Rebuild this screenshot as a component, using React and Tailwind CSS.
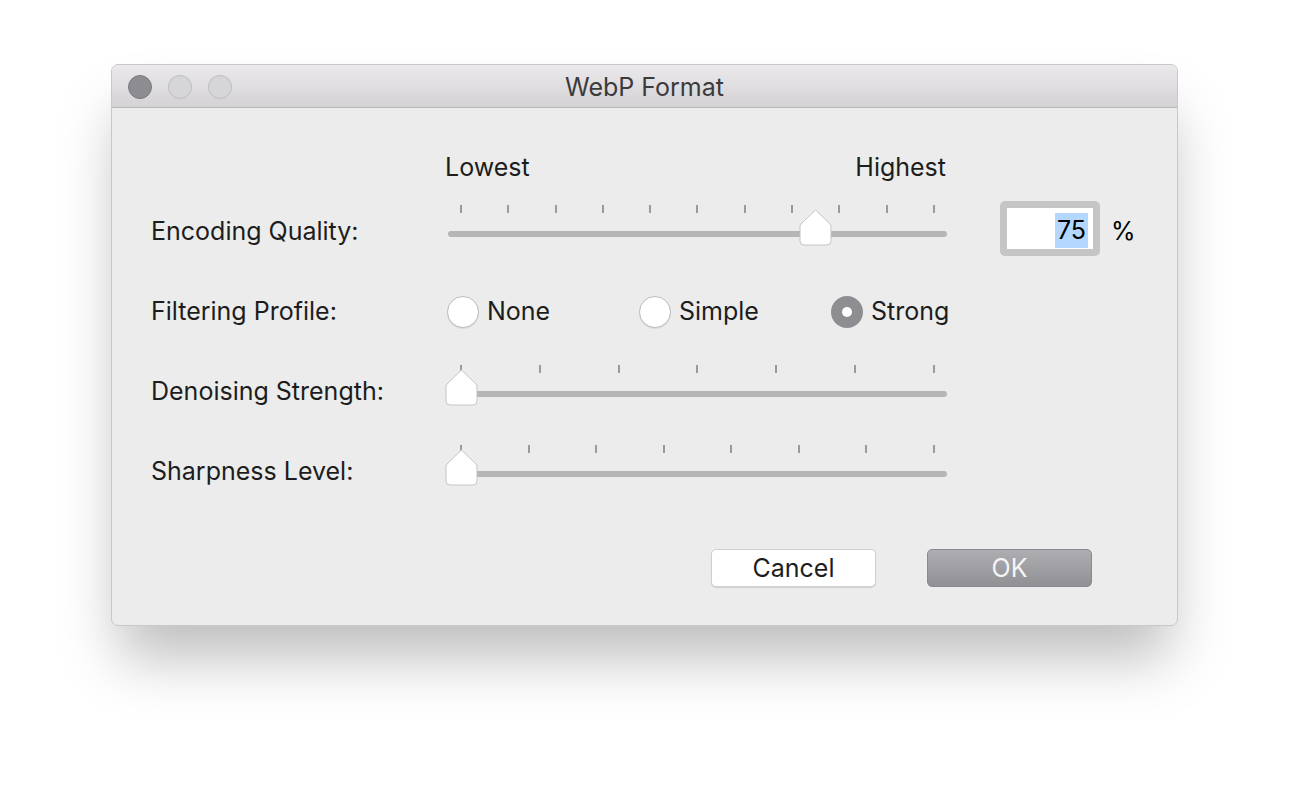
const font = { fontFamily: "Inter, 'Liberation Sans', sans-serif" };

const Thumb = ({ left }) => (
  <svg
    className="absolute top-[4px]"
    style={{ left }}
    width="33"
    height="37"
    viewBox="0 0 33 37"
  >
    <path
      d="M16.5 1 L31 15 Q32 16 32 18 L32 32 Q32 36 28 36 L5 36 Q1 36 1 32 L1 18 Q1 16 2 15 Z"
      fill="#ffffff"
      stroke="#c4c4c4"
      strokeWidth="1"
    />
  </svg>
);

const Slider = ({ ticks, value }) => {
  // tick 0 sits at 13px, last tick at 486px within a 499px track
  const thumbLeft = 13 + value * 473 - 16.5;
  return (
    <div className="relative w-[499px] h-[48px] self-start mt-[13px]">
      <div className="flex justify-between px-[12px]">
        {Array.from({ length: ticks }).map((_, i) => (
          <div key={i} className="w-[2px] h-[8px] bg-[#9b9b9b]" />
        ))}
      </div>
      <div className="mt-[18px] h-[6px] rounded-full bg-[#b6b6b6]" />
      <Thumb left={thumbLeft} />
    </div>
  );
};

const Radio = ({ label, checked }) => (
  <div className="flex items-center w-[193px] -ml-[1px]">
    {checked ? (
      <div className="w-[32px] h-[32px] rounded-full bg-[#8e8e92] flex items-center justify-center">
        <div className="w-[10px] h-[10px] rounded-full bg-white" />
      </div>
    ) : (
      <div className="w-[32px] h-[32px] rounded-full bg-white border border-[#bcbcbc] shadow-[0_1px_1px_rgba(0,0,0,0.08)]" />
    )}
    <span className="ml-[8px] text-[25px] text-[#1d1d1d]">{label}</span>
  </div>
);

const Label = ({ children }) => (
  <div className="w-[297px] text-[25px] text-[#1d1d1d] self-center">{children}</div>
);

export default function App() {
  return (
    <div className="min-h-screen bg-white pt-[64px] pl-[111px]" style={font}>
      <div className="w-[1067px] h-[562px] rounded-[7px] border border-[#c8c8c8] bg-[#ececec] shadow-[0_40px_55px_-8px_rgba(0,0,0,0.26)] overflow-hidden">
        {/* title bar */}
        <div className="relative h-[43px] bg-gradient-to-b from-[#ebe9eb] to-[#d4d2d4] border-b border-[#b8b8b8] flex items-center justify-center pt-[3px]">
          <div className="absolute left-[16px] top-[10px] flex gap-[16px]">
            <div className="w-[24px] h-[24px] rounded-full bg-[#8d8c91] border border-[#7a797e]" />
            <div className="w-[24px] h-[24px] rounded-full bg-[#d6d5d7] border border-[#bdbcbe]" />
            <div className="w-[24px] h-[24px] rounded-full bg-[#d6d5d7] border border-[#bdbcbe]" />
          </div>
          <span className="text-[25px] text-[#3b3b3b]">WebP Format</span>
        </div>

        <div className="pl-[39px]">
          <div className="mt-[45px] mb-[9px] h-[30px] flex items-center">
            <div className="w-[297px]" />
            <div className="w-[499px] flex justify-between text-[25px] text-[#1d1d1d] -ml-[3px]">
              <span>Lowest</span>
              <span className="-mr-[2px]">Highest</span>
            </div>
          </div>

          <div className="h-[80px] flex">
            <Label>Encoding Quality:</Label>
            <Slider ticks={11} value={0.75} />
            <div className="self-start mt-[9px] ml-[53px] w-[100px] h-[55px] rounded-[5px] bg-[#c5c5c5] p-[7px]">
              <div className="h-full bg-white flex items-end justify-end pr-[5px] pb-[1px]">
                <span className="bg-[#b3d7ff] text-[25px] leading-[35px] px-[2px] text-black">75</span>
              </div>
            </div>
            <span className="self-center ml-[11px] text-[25px] text-black">%</span>
          </div>

          <div className="h-[80px] flex items-center">
            <Label>Filtering Profile:</Label>
            <Radio label="None" />
            <Radio label="Simple" />
            <Radio label="Strong" checked />
          </div>

          <div className="h-[80px] flex">
            <Label>Denoising Strength:</Label>
            <Slider ticks={7} value={0} />
          </div>

          <div className="h-[80px] flex">
            <Label>Sharpness Level:</Label>
            <Slider ticks={8} value={0} />
          </div>
        </div>

        <div className="mt-[37px] flex justify-end pr-[85px] gap-[51px]">
          <button className="w-[165px] h-[38px] rounded-[5px] bg-white border border-[#cfcfcf] shadow-[0_1px_1px_rgba(0,0,0,0.12)] text-[25px] text-[#1d1d1d]">
            Cancel
          </button>
          <button className="w-[165px] h-[38px] rounded-[5px] bg-gradient-to-b from-[#aeadb2] to-[#909095] border border-[#8a8a8e] text-[25px] text-[#f4f4f4]">
            OK
          </button>
        </div>
      </div>
    </div>
  );
}
